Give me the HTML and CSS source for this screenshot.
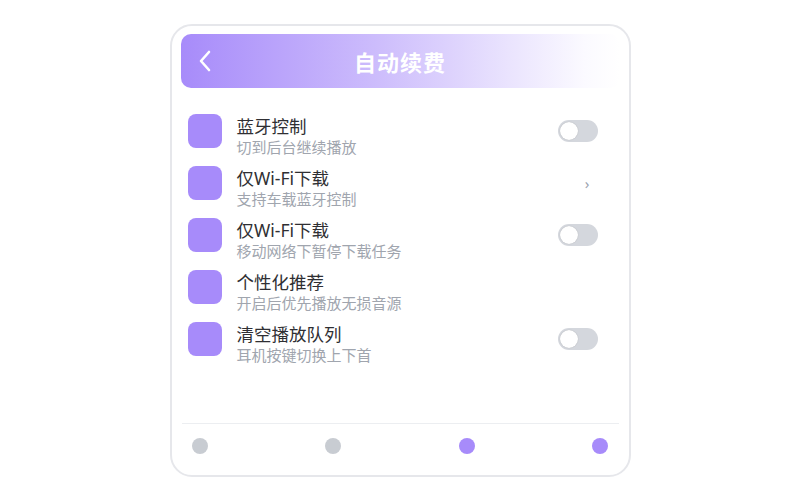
FILE: index.html
```html
<!DOCTYPE html>
<html>
<head>
    <title>自动续费</title>
    <link rel="stylesheet" href="styles.css">
</head>
<body>
    <div class="card">
        <div class="header">
            <span class="back">
                <svg width="14" height="22" viewBox="0 0 14 22"><path d="M11 2 L3 11 L11 20" fill="none" stroke="#fff" stroke-width="2.6" stroke-linecap="round" stroke-linejoin="round"/></svg>
            </span>
            <h1>自动续费</h1>
            <span></span>
        </div>

        <div class="list">
            <div class="row">
                <div class="icon"></div>
                <div class="texts">
                    <div class="title">蓝牙控制</div>
                    <div class="sub">切到后台继续播放</div>
                </div>
                <div class="toggle"><span class="knob"></span></div>
            </div>
            <div class="row">
                <div class="icon"></div>
                <div class="texts">
                    <div class="title">仅Wi-Fi下载</div>
                    <div class="sub">支持车载蓝牙控制</div>
                </div>
                <div class="arrow">›</div>
            </div>
            <div class="row">
                <div class="icon"></div>
                <div class="texts">
                    <div class="title">仅Wi-Fi下载</div>
                    <div class="sub">移动网络下暂停下载任务</div>
                </div>
                <div class="toggle"><span class="knob"></span></div>
            </div>
            <div class="row">
                <div class="icon"></div>
                <div class="texts">
                    <div class="title">个性化推荐</div>
                    <div class="sub">开启后优先播放无损音源</div>
                </div>
            </div>
            <div class="row">
                <div class="icon"></div>
                <div class="texts">
                    <div class="title">清空播放队列</div>
                    <div class="sub">耳机按键切换上下首</div>
                </div>
                <div class="toggle"><span class="knob"></span></div>
            </div>
        </div>

        <div class="nav">
            <span class="dot"></span>
            <span class="dot"></span>
            <span class="dot active"></span>
            <span class="dot active"></span>
        </div>
    </div>
</body>
</html>
```

FILE: styles.css
```css
body {
    margin: 0;
    background-color: #fff;
    font-family: "Noto Sans", "Noto Sans CJK SC", sans-serif;
}

.card {
    box-sizing: border-box;
    width: 461px;
    height: 453px;
    margin: 24px auto 0;
    padding: 8px 9px;
    border: 2px solid #e6e7eb;
    border-radius: 22px;
    background-color: #fff;
    display: flex;
    flex-direction: column;
}

.header {
    height: 54px;
    border-radius: 10px;
    background: linear-gradient(90deg, #a78bfa 0%, #cdbdfc 45%, #fbfaff 92%, #fff 100%);
    display: grid;
    grid-template-columns: 1fr auto 1fr;
    align-items: center;
}

.back {
    display: flex;
    align-items: center;
    padding-left: 17px;
}

.header h1 {
    margin: 0;
    color: #fff;
    font-size: 22px;
    font-weight: bold;
    letter-spacing: 1px;
}

.list {
    flex: 1;
    margin-top: 17px;
}

.row {
    height: 52px;
    display: flex;
    align-items: center;
    padding: 0 22px 0 7px;
}

.icon {
    width: 34px;
    height: 34px;
    border-radius: 8px;
    background-color: #a78bfa;
    flex-shrink: 0;
}

.texts {
    flex: 1;
    margin-left: 15px;
    padding-top: 8px;
}

.title {
    font-size: 17.5px;
    line-height: 24px;
    color: #2f2f33;
}

.sub {
    font-size: 15px;
    line-height: 19px;
    color: #a0a5ae;
}

.toggle {
    width: 40px;
    height: 22px;
    border-radius: 11px;
    background-color: #d4d7dd;
    display: flex;
    align-items: center;
    padding-left: 2px;
    box-sizing: border-box;
}

.knob {
    width: 18px;
    height: 18px;
    border-radius: 50%;
    background-color: #fff;
    box-shadow: 0 0 1px rgba(0, 0, 0, 0.25);
}

.arrow {
    color: #9ca3af;
    font-size: 15px;
    padding-right: 8px;
}

.nav {
    height: 43px;
    border-top: 1px solid #eceef1;
    margin: 0 1px;
    padding: 0 10px;
    display: flex;
    justify-content: space-between;
    align-items: center;
}

.dot {
    width: 16px;
    height: 16px;
    border-radius: 50%;
    background-color: #c8ccd2;
}

.dot.active {
    background-color: #a78bfa;
}
```
